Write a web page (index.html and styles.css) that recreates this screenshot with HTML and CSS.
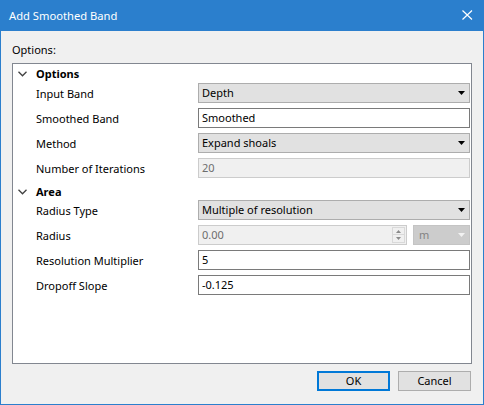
FILE: index.html
```html
<!DOCTYPE html>
<html>
<head>
<meta charset="utf-8">
<link rel="stylesheet" href="styles.css">
</head>
<body>
<div class="window">
  <div class="titlebar">
    <span class="title">Add Smoothed Band</span>
    <svg class="close" width="11" height="10" viewBox="0 0 11 10"><path d="M0.5 0.5 L10 9.5 M10 0.5 L0.5 9.5" stroke="#fff" stroke-width="1.2" fill="none"/></svg>
  </div>
  <div class="body">
    <div class="caption">Options:</div>
    <div class="panel">
      <div class="row cat first">
        <svg class="chev" width="9" height="6" viewBox="0 0 9 6"><path d="M0.5 0.8 L4.5 4.8 L8.5 0.8" stroke="#404040" stroke-width="1.3" fill="none"/></svg>
        <span class="catname">Options</span>
      </div>
      <div class="row">
        <span></span><span class="label">Input Band</span>
        <div class="combo"><span>Depth</span><svg class="arrow" width="7" height="4" viewBox="0 0 7 4"><path d="M0 0 H7 L3.5 4 Z" fill="#000"/></svg></div>
      </div>
      <div class="row">
        <span></span><span class="label">Smoothed Band</span>
        <div class="text">Smoothed</div>
      </div>
      <div class="row">
        <span></span><span class="label">Method</span>
        <div class="combo"><span>Expand shoals</span><svg class="arrow" width="7" height="4" viewBox="0 0 7 4"><path d="M0 0 H7 L3.5 4 Z" fill="#000"/></svg></div>
      </div>
      <div class="row">
        <span></span><span class="label">Number of Iterations</span>
        <div class="text disabled">20</div>
      </div>
      <div class="row cat second">
        <svg class="chev" width="9" height="6" viewBox="0 0 9 6"><path d="M0.5 0.8 L4.5 4.8 L8.5 0.8" stroke="#404040" stroke-width="1.3" fill="none"/></svg>
        <span class="catname">Area</span>
      </div>
      <div class="row">
        <span></span><span class="label">Radius Type</span>
        <div class="combo"><span>Multiple of resolution</span><svg class="arrow" width="7" height="4" viewBox="0 0 7 4"><path d="M0 0 H7 L3.5 4 Z" fill="#000"/></svg></div>
      </div>
      <div class="row">
        <span></span><span class="label">Radius</span>
        <div class="radius">
          <div class="spin">
            <span class="spintext">0.00</span>
            <div class="spinbtns">
              <div class="sb"><svg width="5" height="3" viewBox="0 0 5 3"><path d="M0 3 H5 L2.5 0 Z" fill="#8a8a8a"/></svg></div>
              <div class="sb"><svg width="5" height="3" viewBox="0 0 5 3"><path d="M0 0 H5 L2.5 3 Z" fill="#8a8a8a"/></svg></div>
            </div>
          </div>
          <div class="unit"><span>m</span><svg class="arrow" width="7" height="4" viewBox="0 0 7 4"><path d="M0 0 H7 L3.5 4 Z" fill="#f2f2f2"/></svg></div>
        </div>
      </div>
      <div class="row">
        <span></span><span class="label">Resolution Multiplier</span>
        <div class="text">5</div>
      </div>
      <div class="row">
        <span></span><span class="label">Dropoff Slope</span>
        <div class="text">-0.125</div>
      </div>
    </div>
    <div class="footer">
      <button class="btn default">OK</button>
      <button class="btn">Cancel</button>
    </div>
  </div>
</div>
</body>
</html>
```
FILE: styles.css
```css
html, body {
  margin: 0;
  padding: 0;
}
body {
  font-family: "Noto Sans", "Open Sans", sans-serif;
  font-size: 11px;
  color: #000;
}
.window {
  width: 484px;
  height: 405px;
  background: #2b7fcd;
  display: flex;
  flex-direction: column;
  box-sizing: border-box;
}
.titlebar {
  height: 31px;
  display: flex;
  align-items: center;
  justify-content: space-between;
  padding: 0 11px 0 9px;
  color: #fff;
  flex: none;
}
.title {
  font-size: 11.2px;
  line-height: 16px;
  margin-top: 0;
}
.close {
  display: block;
  margin-top: -1px;
}
.body {
  flex: 1;
  margin: 0 1px 1px 1px;
  background: #f0f0f0;
  padding: 11px 11px 0 11px;
  display: flex;
  flex-direction: column;
}
.caption {
  height: 16px;
  line-height: 16px;
}
.panel {
  margin-top: 5px;
  height: 301px;
  box-sizing: border-box;
  border: 1px solid #828790;
  background: #fff;
}
.row {
  display: grid;
  grid-template-columns: 23px 162px 272px;
  height: 25px;
  align-items: start;
}
.row.cat {
  align-items: center;
}
.row.first {
  height: 19px;
}
.row.second {
  height: 17px;
}
.chev {
  display: block;
  margin-left: 5px;
}
.catname {
  font-weight: bold;
  grid-column: 2 / 4;
  line-height: 16px;
  padding-top: 1px;
}
.label {
  line-height: 20px;
  padding-top: 1px;
}
.combo, .text, .unit, .spin {
  height: 20px;
  box-sizing: border-box;
  display: flex;
  align-items: center;
  line-height: 16px;
}
.combo {
  background: #e1e1e1;
  border: 1px solid #adadad;
  padding-left: 3px;
  justify-content: space-between;
  padding-right: 4px;
}
.arrow {
  display: block;
}
.text {
  background: #fff;
  border: 1px solid #7a7a7a;
  padding-left: 3px;
}
.text.disabled {
  background: #f0f0f0;
  border-color: #cccccc;
  color: #6d6d6d;
}
.radius {
  display: flex;
  gap: 6px;
}
.spin {
  width: 209px;
  background: #f0f0f0;
  border: 1px solid #cccccc;
  padding-left: 3px;
  color: #6d6d6d;
  justify-content: space-between;
  padding-right: 1px;
}
.spinbtns {
  width: 13px;
  height: 16px;
  display: flex;
  flex-direction: column;
  gap: 0;
}
.sb {
  height: 8px;
  box-sizing: border-box;
  border: 1px solid #d9d9d9;
  background: #f0f0f0;
  display: flex;
  align-items: center;
  justify-content: center;
}
.sb + .sb {
  border-top: none;
}
.unit {
  width: 57px;
  background: #cccccc;
  border: 1px solid #c4c4c4;
  color: #838383;
  padding-left: 5px;
  padding-right: 4px;
  justify-content: space-between;
}
.footer {
  display: flex;
  justify-content: flex-end;
  gap: 8px;
  margin-top: 7px;
  padding-right: 1px;
}
.btn {
  width: 73px;
  height: 20px;
  box-sizing: border-box;
  background: #e1e1e1;
  border: 1px solid #adadad;
  font-family: "Noto Sans", "Open Sans", sans-serif;
  font-size: 11px;
  color: #000;
  padding: 0;
  line-height: 16px;
  margin: 0;
}
.btn.default {
  border: 2px solid #0078d7;
}
```
